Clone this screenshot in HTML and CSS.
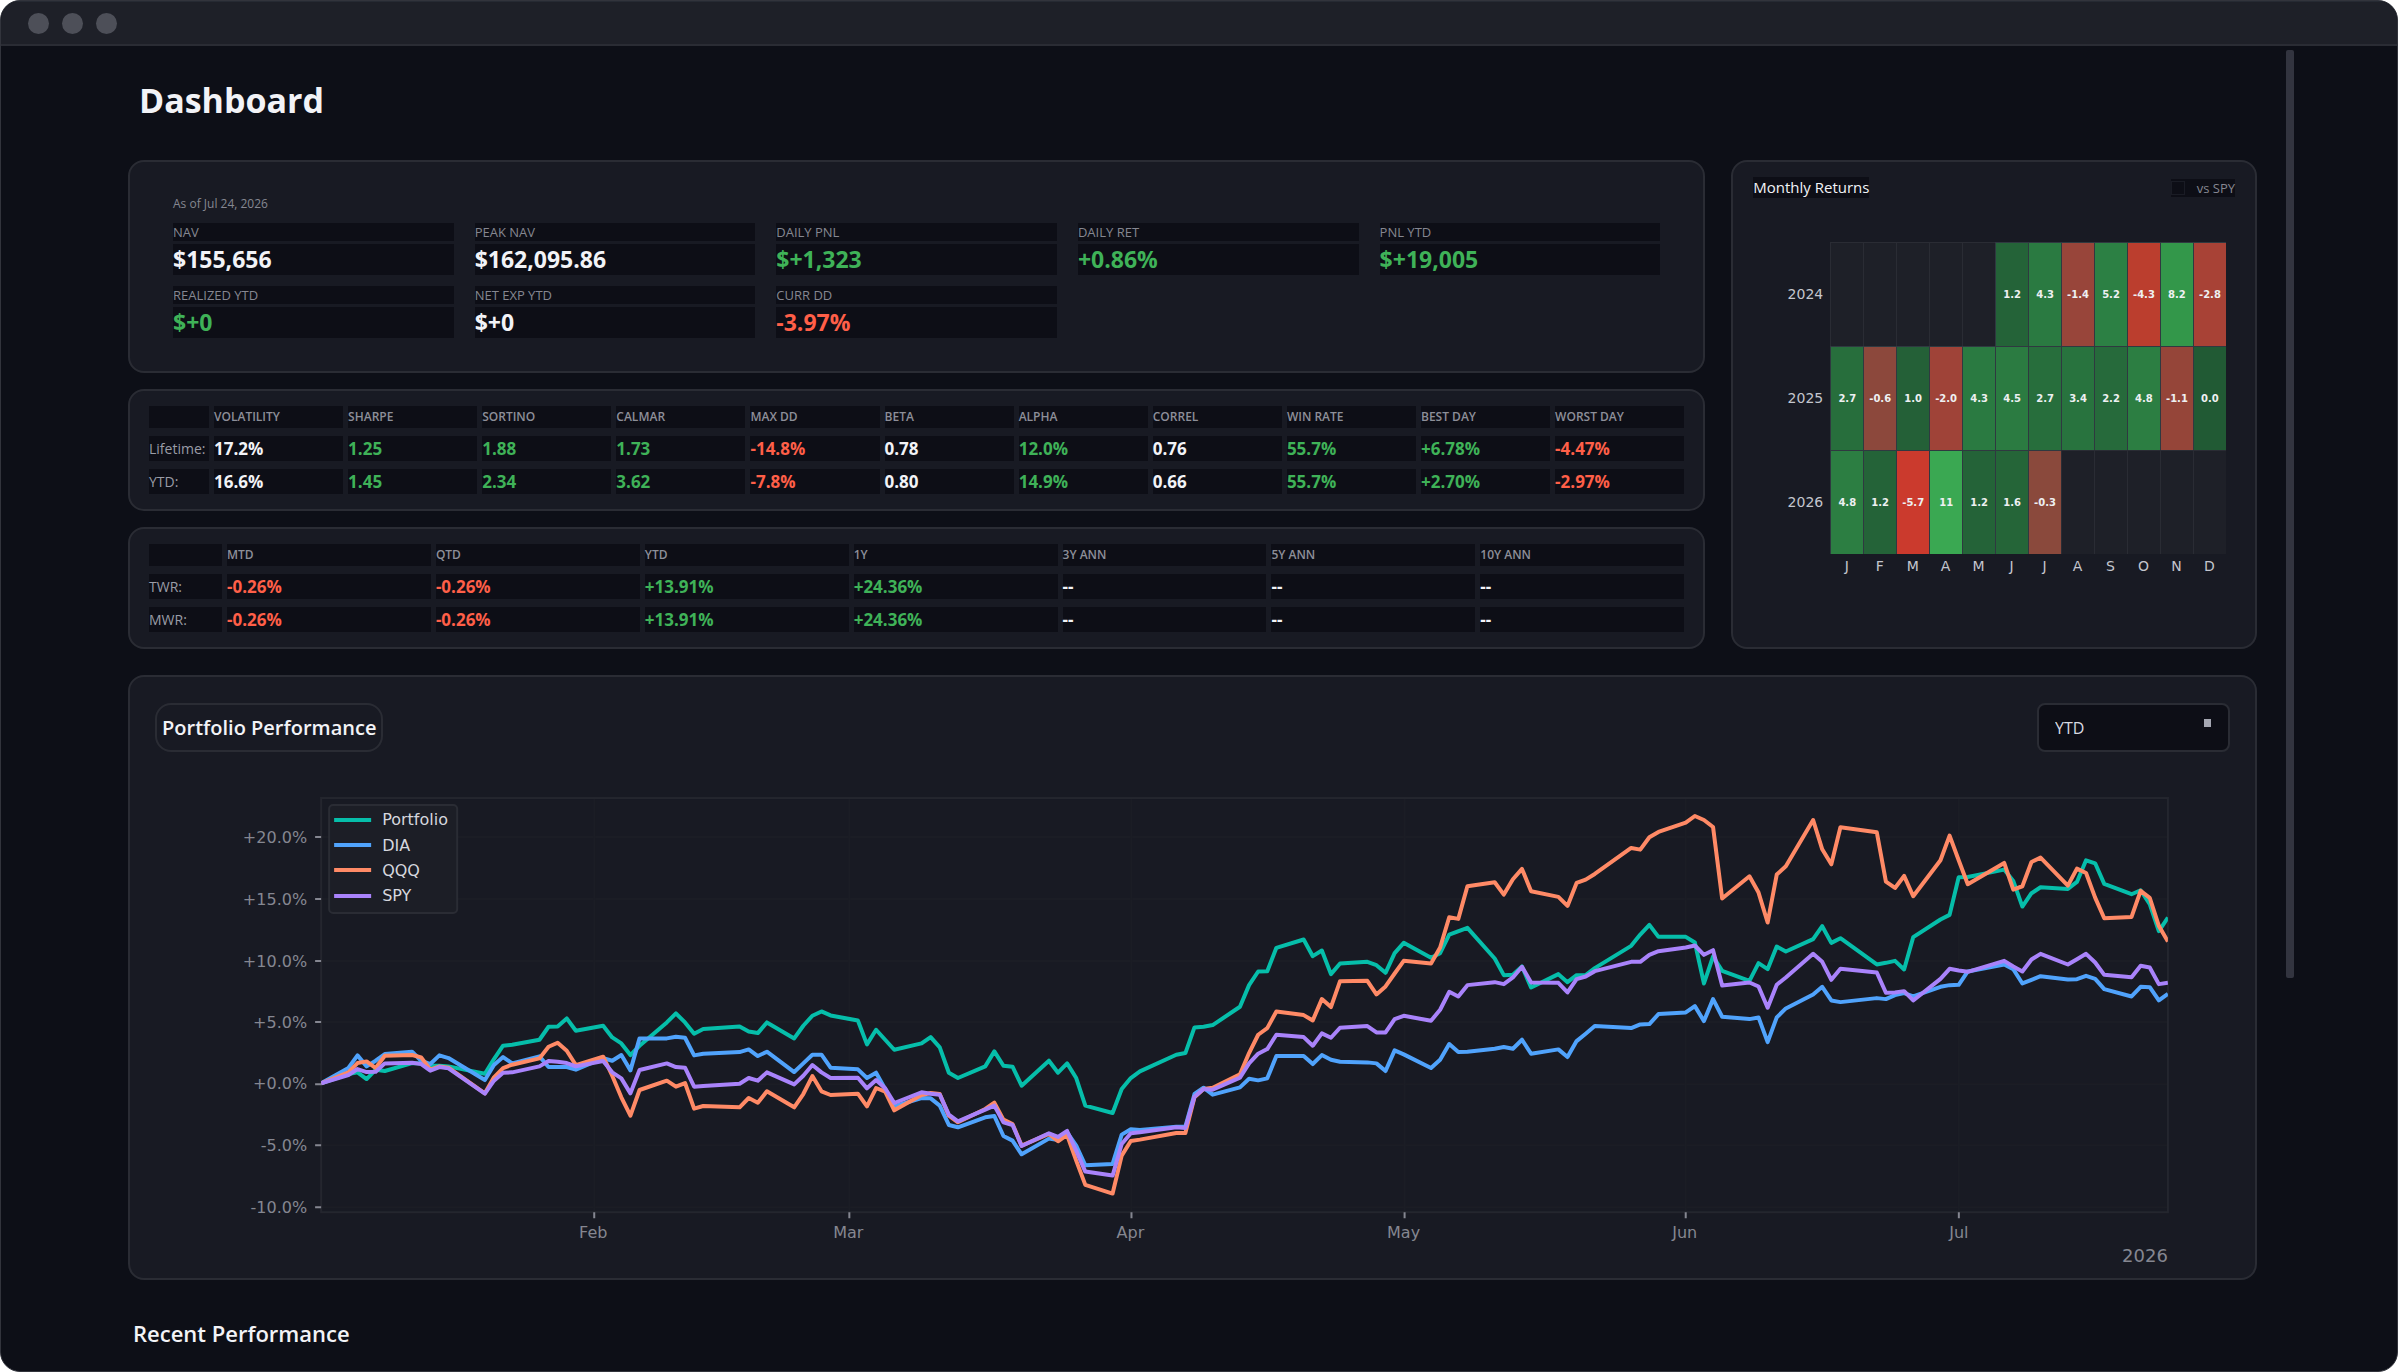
FILE: index.html
```html
<!DOCTYPE html>
<html lang="en">
<head>
<meta charset="utf-8">
<meta name="viewport" content="width=device-width, initial-scale=1">
<title>Dashboard</title>
<link rel="stylesheet" href="styles.css">
</head>
<body>
<div class="window">
  <header class="titlebar">
    <span class="dot"></span><span class="dot"></span><span class="dot"></span>
  </header>
  <div class="viewport">
    <main class="content">
      <h1 class="page-title">Dashboard</h1>

      <div class="overview">
        <div class="stack">
          <section class="card summary">
            <p class="as-of">As of Jul 24, 2026</p>
            <dl class="kpis">
              <div class="kpi"><dt>NAV</dt><dd>$155,656</dd></div>
              <div class="kpi"><dt>PEAK NAV</dt><dd>$162,095.86</dd></div>
              <div class="kpi"><dt>DAILY PNL</dt><dd class="up">$+1,323</dd></div>
              <div class="kpi"><dt>DAILY RET</dt><dd class="up">+0.86%</dd></div>
              <div class="kpi"><dt>PNL YTD</dt><dd class="up">$+19,005</dd></div>
              <div class="kpi"><dt>REALIZED YTD</dt><dd class="up">$+0</dd></div>
              <div class="kpi"><dt>NET EXP YTD</dt><dd>$+0</dd></div>
              <div class="kpi"><dt>CURR DD</dt><dd class="down">-3.97%</dd></div>
            </dl>
          </section>

          <section class="card metrics">
            <table class="stats">
              <colgroup><col class="risk-label"><col span="11"></colgroup>
              <thead>
                <tr><td></td><th scope="col">VOLATILITY</th><th scope="col">SHARPE</th><th scope="col">SORTINO</th><th scope="col">CALMAR</th><th scope="col">MAX DD</th><th scope="col">BETA</th><th scope="col">ALPHA</th><th scope="col">CORREL</th><th scope="col">WIN RATE</th><th scope="col">BEST DAY</th><th scope="col">WORST DAY</th></tr>
              </thead>
              <tbody>
                <tr><th scope="row">Lifetime:</th><td>17.2%</td><td class="up">1.25</td><td class="up">1.88</td><td class="up">1.73</td><td class="down">-14.8%</td><td>0.78</td><td class="up">12.0%</td><td>0.76</td><td class="up">55.7%</td><td class="up">+6.78%</td><td class="down">-4.47%</td></tr>
                <tr><th scope="row">YTD:</th><td>16.6%</td><td class="up">1.45</td><td class="up">2.34</td><td class="up">3.62</td><td class="down">-7.8%</td><td>0.80</td><td class="up">14.9%</td><td>0.66</td><td class="up">55.7%</td><td class="up">+2.70%</td><td class="down">-2.97%</td></tr>
              </tbody>
            </table>
          </section>

          <section class="card metrics">
            <table class="stats">
              <colgroup><col class="return-label"><col span="7"></colgroup>
              <thead>
                <tr><td></td><th scope="col">MTD</th><th scope="col">QTD</th><th scope="col">YTD</th><th scope="col">1Y</th><th scope="col">3Y ANN</th><th scope="col">5Y ANN</th><th scope="col">10Y ANN</th></tr>
              </thead>
              <tbody>
                <tr><th scope="row">TWR:</th><td class="down">-0.26%</td><td class="down">-0.26%</td><td class="up">+13.91%</td><td class="up">+24.36%</td><td>--</td><td>--</td><td>--</td></tr>
                <tr><th scope="row">MWR:</th><td class="down">-0.26%</td><td class="down">-0.26%</td><td class="up">+13.91%</td><td class="up">+24.36%</td><td>--</td><td>--</td><td>--</td></tr>
              </tbody>
            </table>
          </section>
        </div>

        <section class="card monthly">
          <div class="monthly-head">
            <h2 class="monthly-title">Monthly Returns</h2>
            <label class="compare"><input type="checkbox" class="compare-box">vs SPY</label>
          </div>
          <table class="heatmap">
            <tbody>
              <tr><th scope="row">2024</th><td></td><td></td><td></td><td></td><td></td><td style="background:#246338">1.2</td><td style="background:#2a7a41">4.3</td><td style="background:#98453a">-1.4</td><td style="background:#2c8044">5.2</td><td style="background:#bb3e2e">-4.3</td><td style="background:#33974a">8.2</td><td style="background:#a84236">-2.8</td></tr>
              <tr><th scope="row">2025</th><td style="background:#276e3c">2.7</td><td style="background:#8c483c">-0.6</td><td style="background:#246037">1.0</td><td style="background:#9f4338">-2.0</td><td style="background:#2a7a41">4.3</td><td style="background:#2b7b41">4.5</td><td style="background:#276e3c">2.7</td><td style="background:#28733e">3.4</td><td style="background:#266a3b">2.2</td><td style="background:#2c7e42">4.8</td><td style="background:#954539">-1.1</td><td style="background:#215a34">0.0</td></tr>
              <tr><th scope="row">2026</th><td style="background:#2c7e42">4.8</td><td style="background:#246338">1.2</td><td style="background:#cb3a2d">-5.7</td><td style="background:#3aa852">11</td><td style="background:#246338">1.2</td><td style="background:#256538">1.6</td><td style="background:#8a493c">-0.3</td><td></td><td></td><td></td><td></td><td></td></tr>
            </tbody>
            <tfoot>
              <tr><td></td><th scope="col">J</th><th scope="col">F</th><th scope="col">M</th><th scope="col">A</th><th scope="col">M</th><th scope="col">J</th><th scope="col">J</th><th scope="col">A</th><th scope="col">S</th><th scope="col">O</th><th scope="col">N</th><th scope="col">D</th></tr>
            </tfoot>
          </table>
        </section>
      </div>

      <section class="card performance">
        <div class="performance-head">
          <h2 class="performance-title">Portfolio Performance</h2>
          <div class="range">
            <select class="range-select" aria-label="Period"><option>YTD</option></select>
            <span class="range-mark"></span>
          </div>
        </div>
        <svg class="chart" viewBox="1 1 2124 526" role="img" aria-label="Portfolio performance against DIA, QQQ and SPY">
          <g class="grid">
            <path d="M192 86H2038M192 148H2038M192 210H2038M192 271H2038M192 333H2038M192 394H2038M192 456H2038"/>
            <path d="M465 47V461M720 47V461M1002 47V461M1275 47V461M1556 47V461M1829 47V461"/>
          </g>
          <rect class="frame" x="192" y="47" width="1846" height="414"/>
          <path class="ticks" d="M186 86h6M186 148h6M186 210h6M186 271h6M186 333h6M186 394h6M186 456h6M465 461v6M720 461v6M1002 461v6M1275 461v6M1556 461v6M1829 461v6"/>
          <!-- x: days since Jan 2 -->
          <svg x="192" y="47" width="1846" height="414" viewBox="0 56 203 1244" preserveAspectRatio="none">
            <polyline class="line portfolio" points="0,913 3,885 4,880 5,900 6,872 7,876 10,852 11,853 12,860 13,860 14,862 18,884 19,840 20,800 21,797 24,782 25,743 26,742 27,718 28,755 31,740 32,775 33,793 34,828 35,800 38,730 39,703 40,730 41,764 42,750 46,742 47,757 48,762 49,730 52,778 53,740 54,710 55,697 56,709 59,724 60,796 61,752 62,782 63,812 66,793 67,774 68,805 69,881 70,897 73,862 74,817 75,860 76,863 77,920 80,845 81,881 82,853 83,897 84,980 87,1002 88,930 89,897 90,877 94,827 95,822 96,745 97,743 98,738 101,683 102,618 103,577 104,576 105,506 108,481 109,531 110,514 111,585 112,553 115,548 116,558 117,581 118,522 119,491 122,536 123,522 124,466 126,446 129,538 130,588 131,587 132,562 133,625 136,585 137,609 138,588 139,588 140,567 144,500 145,466 146,437 147,473 150,473 151,490 152,613 153,532 154,575 157,605 158,552 159,570 160,502 161,517 164,480 165,441 166,491 167,477 171,556 172,551 173,545 174,571 175,474 178,421 179,407 180,294 181,293 185,271 186,305 187,382 188,342 189,324 192,329 193,308 194,243 195,252 196,314 199,345 200,333 201,375 202,456 203,415"/>
            <polyline class="line dia" points="0,913 3,867 4,829 5,862 6,845 7,825 10,818 11,845 12,855 13,829 14,837 18,903 19,858 20,834 21,853 24,832 25,864 26,864 27,864 28,872 31,837 32,845 33,828 34,874 35,778 38,778 39,773 40,776 41,829 42,824 46,819 47,811 48,831 49,818 52,879 53,853 54,827 55,827 56,866 59,871 60,897 61,881 62,930 63,982 66,957 67,958 68,980 69,1038 70,1045 73,1015 74,1011 75,1071 76,1085 77,1126 80,1079 81,1083 82,1060 83,1100 84,1159 87,1155 88,1067 89,1051 90,1053 94,1043 95,1043 96,945 97,926 98,947 101,925 102,899 103,904 104,898 105,831 108,831 109,855 110,828 111,842 112,848 115,850 116,853 117,876 118,814 119,826 122,867 123,842 124,795 125,819 126,818 129,809 130,804 131,809 132,782 133,824 136,811 137,834 138,786 139,764 140,741 144,747 145,736 146,735 147,705 150,700 151,681 152,726 153,660 154,713 157,720 158,715 159,789 160,715 161,688 164,646 165,623 166,664 167,669 171,657 172,660 173,648 174,642 175,652 178,623 179,618 180,617 181,577 185,556 186,570 187,613 188,602 189,591 192,601 193,600 194,590 195,599 196,630 199,652 200,623 201,624 202,664 203,644"/>
            <polyline class="line qqq" points="0,913 3,880 4,852 5,847 6,867 7,830 10,828 11,835 12,872 13,862 14,866 18,943 19,895 20,867 21,857 24,838 25,803 26,791 27,815 28,858 31,833 32,890 33,955 34,1010 35,933 38,905 39,923 40,912 41,989 42,981 46,985 47,957 48,971 49,937 52,985 53,945 54,891 55,937 56,948 59,944 60,982 61,927 62,938 63,994 66,948 67,942 68,945 69,1010 70,1030 73,990 74,971 75,1022 76,1035 77,1100 80,1065 81,1087 82,1068 83,1145 84,1218 87,1244 88,1130 89,1086 90,1082 94,1062 95,1062 96,955 97,930 98,926 101,886 102,822 103,767 104,747 105,697 108,708 109,724 110,660 111,684 112,606 115,605 116,646 117,622 118,583 119,545 122,553 123,505 124,414 125,419 126,321 129,309 130,346 131,300 132,269 133,336 136,353 137,380 138,311 139,301 140,284 144,206 145,211 146,174 147,158 150,130 151,110 152,122 153,143 154,358 157,291 158,340 159,430 160,286 161,261 164,122 165,210 166,255 167,144 171,159 172,307 173,326 174,290 175,351 178,243 179,169 180,243 181,315 185,251 186,331 187,321 188,248 189,235 192,319 193,268 194,281 195,355 196,417 199,413 200,335 201,356 202,440 203,487"/>
            <polyline class="line spy" points="0,913 3,888 4,870 5,879 6,878 7,853 10,851 11,855 12,875 13,864 14,868 18,944 19,905 20,881 21,880 24,862 25,846 26,848 27,852 28,862 31,846 32,880 33,898 34,943 35,873 38,853 39,864 40,866 41,923 42,921 46,914 47,897 48,905 49,880 52,916 53,890 54,858 55,880 56,897 59,896 60,928 61,903 62,928 63,972 66,940 67,944 68,947 69,1007 70,1027 73,992 74,980 75,1030 76,1038 77,1101 80,1063 81,1074 82,1056 83,1115 84,1178 87,1190 88,1095 89,1063 90,1060 94,1045 95,1047 96,953 97,930 98,932 101,896 102,853 103,824 104,810 105,767 108,774 109,800 110,763 111,776 112,746 115,741 116,760 117,760 118,720 119,710 122,725 123,692 124,638 125,652 126,618 129,609 130,615 131,595 132,563 133,610 136,611 137,640 138,600 139,592 140,576 144,548 145,548 146,527 147,516 150,505 151,499 152,527 153,513 154,619 157,610 158,622 159,686 160,617 161,595 164,524 165,548 166,602 167,569 171,580 172,641 173,640 174,636 175,664 178,599 179,569 180,574 181,578 185,545 186,562 187,577 188,541 189,524 192,556 193,540 194,524 195,550 196,587 199,594 200,560 201,565 202,615 203,611"/>
          </svg>
          <g class="axis axis-y">
            <text x="178" y="92">+20.0%</text>
            <text x="178" y="154">+15.0%</text>
            <text x="178" y="216">+10.0%</text>
            <text x="178" y="277">+5.0%</text>
            <text x="178" y="338">+0.0%</text>
            <text x="178" y="400">-5.0%</text>
            <text x="178" y="462">-10.0%</text>
          </g>
          <g class="axis axis-x">
            <text x="464" y="487">Feb</text>
            <text x="719" y="487">Mar</text>
            <text x="1001" y="487">Apr</text>
            <text x="1274" y="487">May</text>
            <text x="1555" y="487">Jun</text>
            <text x="1829" y="487">Jul</text>
          </g>
          <text class="axis-year" x="2038" y="511">2026</text>
          <g class="legend">
            <rect class="legend-box" x="200" y="54" width="128" height="108" rx="4"/>
            <path class="line portfolio" d="M205 69h37"/>
            <path class="line dia" d="M205 94h37"/>
            <path class="line qqq" d="M205 119h37"/>
            <path class="line spy" d="M205 145h37"/>
            <text x="253" y="74">Portfolio</text>
            <text x="253" y="100">DIA</text>
            <text x="253" y="125">QQQ</text>
            <text x="253" y="150">SPY</text>
          </g>
        </svg>
      </section>

      <h2 class="section-title">Recent Performance</h2>
    </main>
    <div class="scroll-thumb"></div>
  </div>
</div>
</body>
</html>
```
FILE: styles.css
```css
:root {
  --page: #0d0f17;
  --cell: #0d0e16;
  --card: #181a23;
  --line: #2a2c34;
  --muted: #858791;
  --text: #f2f3f7;
  --up: #3fb258;
  --down: #ff5f48;
}

* { box-sizing: border-box; }

html { background: #fff; }

body {
  margin: 0;
  padding-right: 2px;
  color: var(--text);
  font-family: "Segoe UI", "Open Sans", sans-serif;
}

h1, h2, p, dl, dd { margin: 0; }

.window {
  display: flex;
  flex-direction: column;
  min-height: 100vh;
  overflow: hidden;
  background: var(--page);
  border: 1px solid #32343c;
  border-radius: 20px;
}

.titlebar {
  display: flex;
  align-items: center;
  gap: 13px;
  height: 45px;
  padding-left: 27px;
  background: #1e2028;
  border-top: 1px solid #262a33;
  border-bottom: 2px solid #2a2c34;
}

.dot {
  width: 21px;
  height: 21px;
  border-radius: 50%;
  background: #4d4f58;
}

.viewport {
  display: flex;
  align-items: flex-start;
  gap: 29px;
  padding: 4px 103px 0 127px;
}

.content {
  flex: 1;
  min-width: 0;
}

.scroll-thumb {
  width: 8px;
  height: 928px;
  border-radius: 2px;
  background: #32343f;
}

.page-title {
  padding: 26px 0 36px 11px;
  font-size: 34px;
  line-height: 48px;
  font-weight: 700;
}

.card {
  background: var(--card);
  border: 2px solid var(--line);
  border-radius: 16px;
}

.overview {
  display: grid;
  grid-template-columns: 3fr 1fr;
  gap: 26px;
}

.stack {
  display: flex;
  flex-direction: column;
  gap: 16px;
}

.summary { padding: 32px 43px 33px; }

.as-of {
  margin-bottom: 9px;
  color: var(--muted);
  font-size: 12px;
  line-height: 20px;
}

.kpis {
  display: grid;
  grid-template-columns: repeat(5, 1fr);
  gap: 11px 21px;
}

.kpi {
  display: grid;
  gap: 3px;
}

.kpi dt {
  background: var(--cell);
  color: var(--muted);
  font-size: 13px;
  line-height: 18px;
}

.kpi dd {
  background: var(--cell);
  font-size: 23px;
  line-height: 31px;
  font-weight: 700;
}

.kpi .up, .stats .up { color: var(--up); }
.kpi .down, .stats .down { color: var(--down); }

.metrics { padding: 7px 14px; }

.stats {
  width: 100%;
  table-layout: fixed;
  border-collapse: separate;
  border-spacing: 5px 8px;
  text-align: left;
}

.risk-label { width: 60px; }
.return-label { width: 73px; }

.stats th, .stats td {
  padding: 0;
  background: var(--cell);
  white-space: nowrap;
}

.stats td {
  font-size: 17px;
  line-height: 25px;
  font-weight: 700;
}

.stats thead th, .stats thead td {
  color: #8d8f99;
  font-size: 12px;
  line-height: 22px;
  font-weight: 600;
}

.stats tbody th {
  color: #9a9ca6;
  font-size: 14px;
  line-height: 25px;
  font-weight: 400;
}

.monthly { padding: 15px 20px; }

.monthly-head {
  display: flex;
  align-items: center;
  justify-content: space-between;
}

.monthly-title {
  background: var(--cell);
  font-size: 15px;
  line-height: 21px;
  font-weight: 500;
}

.compare {
  display: flex;
  align-items: center;
  gap: 12px;
  background: var(--cell);
  color: var(--muted);
  font-size: 13px;
  line-height: 18px;
}

.compare-box {
  appearance: none;
  width: 14px;
  height: 14px;
  margin: 0;
  background: var(--cell);
  border: 1px solid #1a1c25;
}

.heatmap {
  width: 100%;
  margin-top: 44px;
  padding-right: 9px;
  table-layout: fixed;
  border-collapse: separate;
  border-spacing: 0;
  font-family: "DejaVu Sans", sans-serif;
}

.heatmap th, .heatmap td {
  padding: 0;
  text-align: center;
}

.heatmap tbody td {
  height: 104px;
  background: #1e2028;
  border: solid #2f3940;
  border-width: 1px 0 0 1px;
  color: #eef0f2;
  font-size: 10px;
  font-weight: 700;
}

.heatmap tbody td:empty { border-color: #2a2c34; }

.heatmap tbody th {
  width: 77px;
  padding-right: 7px;
  color: #c4c6ce;
  font-size: 14px;
  font-weight: 400;
  text-align: right;
}

.heatmap tfoot th {
  color: #c4c6ce;
  font-size: 14px;
  line-height: 25px;
  font-weight: 400;
}

.performance { margin-top: 26px; }

.performance-head {
  display: flex;
  align-items: center;
  justify-content: space-between;
  padding: 26px 25px 0;
}

.performance-title {
  padding: 0 5px;
  border: 2px solid var(--line);
  border-radius: 16px;
  font-size: 20px;
  line-height: 45px;
  font-weight: 600;
}

.range {
  position: relative;
  width: 193px;
}

.range-select {
  appearance: none;
  display: block;
  width: 100%;
  height: 49px;
  padding: 0 16px;
  background: var(--cell);
  border: 2px solid var(--line);
  border-radius: 8px;
  color: #d9dbe2;
  font-family: inherit;
  font-size: 16px;
}

.range-mark {
  position: absolute;
  top: 16px;
  right: 19px;
  width: 7px;
  height: 8px;
  background: #a5a7b2;
  pointer-events: none;
}

.chart {
  display: block;
  width: 100%;
  height: auto;
  font-family: "DejaVu Sans", sans-serif;
  font-size: 16px;
}

.grid { fill: none; stroke: #1b1d25; stroke-width: 2; }
.frame { fill: none; stroke: #24262e; stroke-width: 2; }
.ticks { fill: none; stroke: #858791; stroke-width: 2; }

.line {
  fill: none;
  stroke-width: 4;
  stroke-linejoin: round;
  vector-effect: non-scaling-stroke;
}

.portfolio { stroke: #06beaa; }
.dia { stroke: #50a3fc; }
.qqq { stroke: #ff8a66; }
.spy { stroke: #a983fb; }

.performance.card { stroke: none; }

.axis, .axis-year { fill: #858791; }
.axis-y, .axis-year { text-anchor: end; }
.axis-x { text-anchor: middle; }
.axis-year { font-size: 18px; }

.legend { fill: #d5d7de; }
.legend-box { fill: #1c1e26; stroke: #2a2c34; stroke-width: 2; }

.section-title {
  padding: 38px 0 22px 5px;
  font-size: 22px;
  line-height: 30px;
  font-weight: 600;
}
```
